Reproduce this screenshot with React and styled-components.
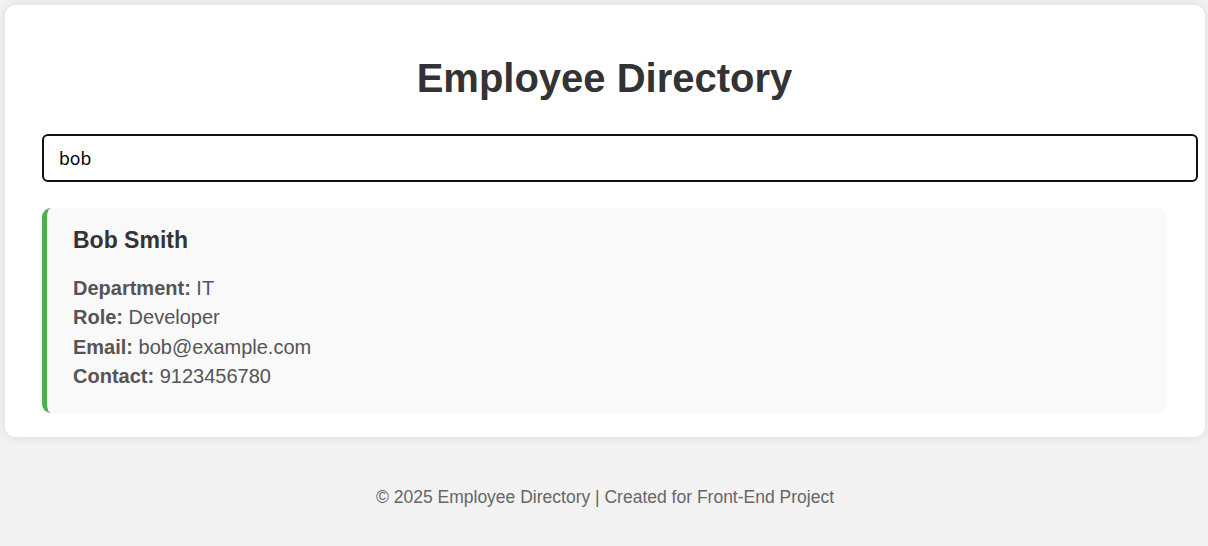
import React, { useState } from "react";
import styled, { createGlobalStyle } from "styled-components";

const GlobalStyle = createGlobalStyle`
  html, body {
    margin: 0;
    padding: 0;
    background: #f2f2f2;
    font-family: "Liberation Sans", Arial, sans-serif;
  }
  * { box-sizing: content-box; }
`;

const Page = styled.div`
  padding: 5px 3px 0 5px;
`;

const Container = styled.main`
  background: #ffffff;
  border-radius: 11px;
  box-shadow: 0 0 11px rgba(0, 0, 0, 0.1);
  padding: 50px 38px 24px 37px;
`;

const Title = styled.h1`
  margin: 0 0 33px;
  text-align: center;
  font-size: 40px;
  line-height: 46px;
  font-weight: 700;
  color: #333333;
`;

const SearchInput = styled.input`
  display: block;
  margin: 0 0 26px;
  padding: 12px 15px;
  border: 2px solid #111111;
  border-radius: 6px;
  font-family: "Noto Sans", "Open Sans", sans-serif;
  font-size: 17.6px;
  line-height: 20px;
  color: #000;
  background: #fff;
  outline: none;
  box-sizing: border-box;
  width: calc(100% + 31px);
  height: 48px;
`;

const List = styled.div`
  display: flex;
  flex-direction: column;
  gap: 20px;
`;

const Card = styled.article`
  background: #f9f9f9;
  border-left: 5px solid #4caf50;
  border-radius: 9px;
  padding: 19px 26px 22px 26px;
`;

const Name = styled.h3`
  margin: 0 0 20px;
  font-size: 23px;
  line-height: 27px;
  font-weight: 700;
  color: #333333;
`;

const Detail = styled.p`
  margin: 0;
  font-size: 20px;
  line-height: 29.3px;
  color: #555555;
`;

const Label = styled.strong`
  font-weight: 700;
`;

const Footer = styled.footer`
  text-align: center;
  padding: 50px 0 30px;
  font-size: 17.5px;
  line-height: 20px;
  color: #666666;
`;

const employees = [
  { name: "Bob Smith", department: "IT", role: "Developer", email: "bob@example.com", contact: "9123456780" },
];

export default function App() {
  const [query, setQuery] = useState("bob");
  const results = employees.filter((e) => e.name.toLowerCase().includes(query.toLowerCase()));
  return (
    <>
      <GlobalStyle />
      <Page>
        <Container>
          <Title>Employee Directory</Title>
          <SearchInput value={query} onChange={(e) => setQuery(e.target.value)} />
          <List>
            {results.map((e) => (
              <Card key={e.email}>
                <Name>{e.name}</Name>
                <Detail><Label>Department:</Label> {e.department}</Detail>
                <Detail><Label>Role:</Label> {e.role}</Detail>
                <Detail><Label>Email:</Label> {e.email}</Detail>
                <Detail><Label>Contact:</Label> {e.contact}</Detail>
              </Card>
            ))}
          </List>
        </Container>
        <Footer>© 2025 Employee Directory | Created for Front-End Project</Footer>
      </Page>
    </>
  );
}
